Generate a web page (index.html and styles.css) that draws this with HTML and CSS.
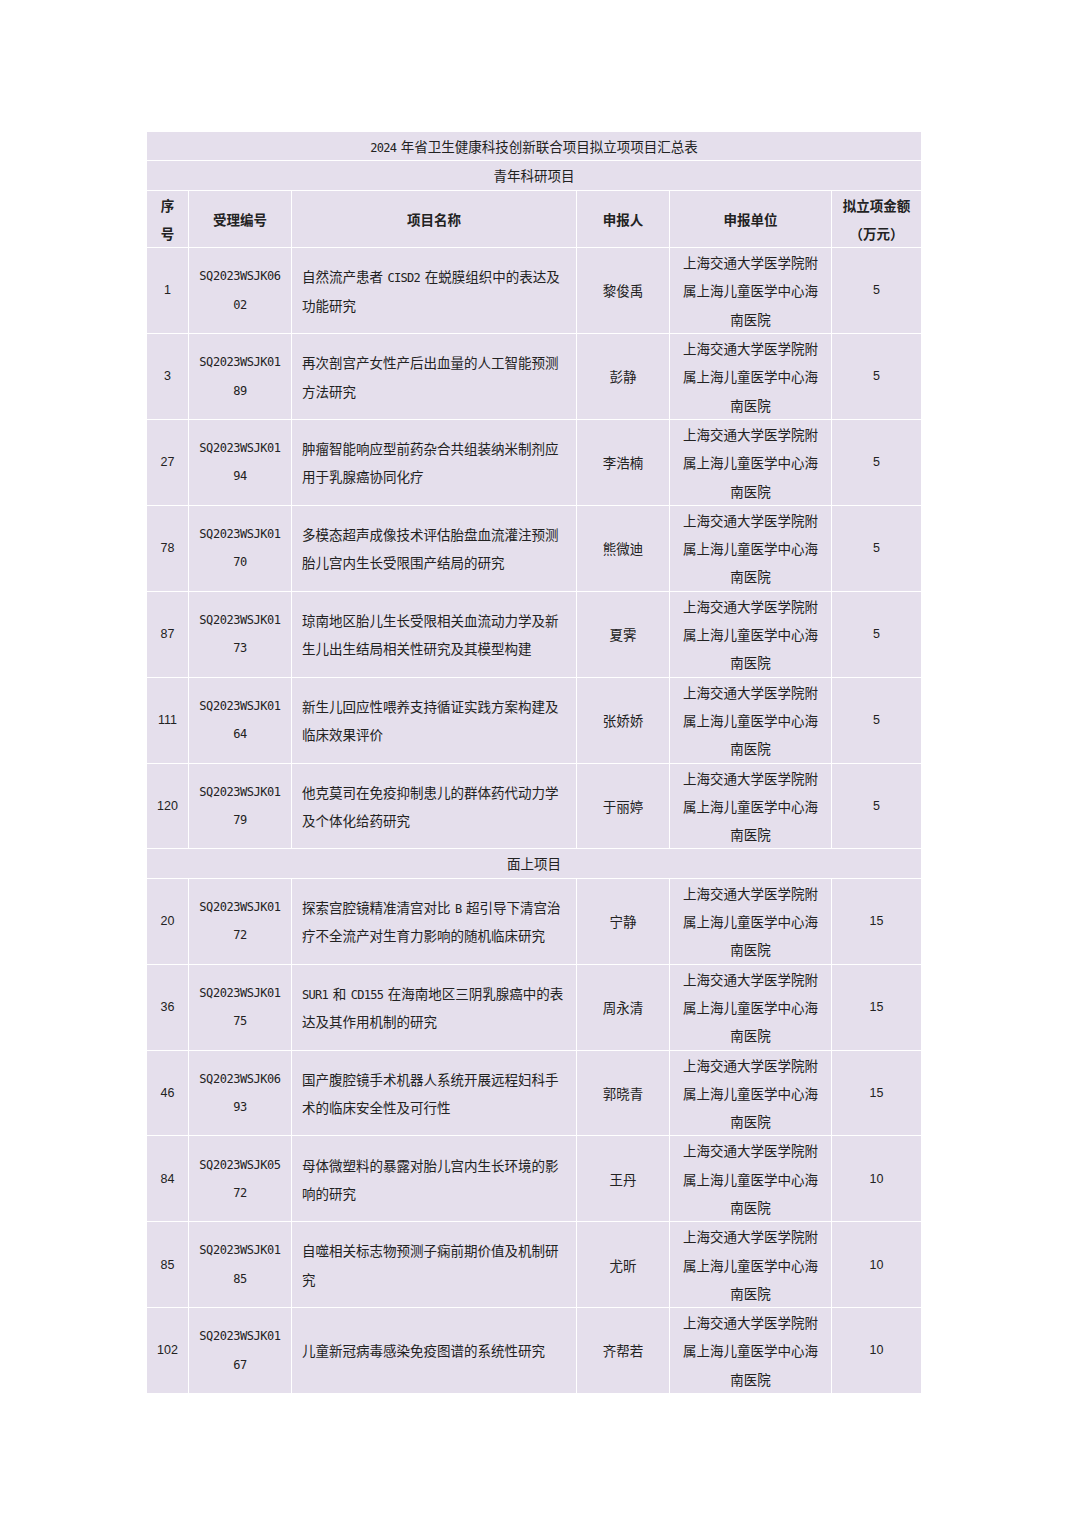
FILE: index.html
```html
<!DOCTYPE html>
<html lang="zh-CN">
<head>
<meta charset="utf-8">
<title>2024年省卫生健康科技创新联合项目拟立项项目汇总表</title>
<link rel="stylesheet" href="styles.css">
</head>
<body>
<div class="page">
<table class="sheet">
<colgroup>
<col class="c-no"><col class="c-code"><col class="c-name"><col class="c-person"><col class="c-unit"><col class="c-amt">
</colgroup>
<tbody>
<tr><td colspan="6" class="banner"><span class="lat">2024 </span>年省卫生健康科技创新联合项目拟立项项目汇总表</td></tr>
<tr><td colspan="6" class="banner">青年科研项目</td></tr>
<tr class="head">
<th class="no">序号</th><th>受理编号</th><th>项目名称</th><th>申报人</th><th class="unit">申报单位</th><th class="amt">拟立项金额（万元）</th>
</tr>
<tr><td class="num">1</td><td class="code">SQ2023WSJK0602</td><td class="title">自然流产患者<span class="lat"> CISD2 </span>在蜕膜组织中的表达及功能研究</td><td>黎俊禹</td><td class="unit">上海交通大学医学院附属上海儿童医学中心海南医院</td><td class="num">5</td></tr>
<tr><td class="num">3</td><td class="code">SQ2023WSJK0189</td><td class="title">再次剖宫产女性产后出血量的人工智能预测方法研究</td><td>彭静</td><td class="unit">上海交通大学医学院附属上海儿童医学中心海南医院</td><td class="num">5</td></tr>
<tr><td class="num">27</td><td class="code">SQ2023WSJK0194</td><td class="title">肿瘤智能响应型前药杂合共组装纳米制剂应用于乳腺癌协同化疗</td><td>李浩楠</td><td class="unit">上海交通大学医学院附属上海儿童医学中心海南医院</td><td class="num">5</td></tr>
<tr><td class="num">78</td><td class="code">SQ2023WSJK0170</td><td class="title">多模态超声成像技术评估胎盘血流灌注预测胎儿宫内生长受限围产结局的研究</td><td>熊微迪</td><td class="unit">上海交通大学医学院附属上海儿童医学中心海南医院</td><td class="num">5</td></tr>
<tr><td class="num">87</td><td class="code">SQ2023WSJK0173</td><td class="title">琼南地区胎儿生长受限相关血流动力学及新生儿出生结局相关性研究及其模型构建</td><td>夏霁</td><td class="unit">上海交通大学医学院附属上海儿童医学中心海南医院</td><td class="num">5</td></tr>
<tr><td class="num">111</td><td class="code">SQ2023WSJK0164</td><td class="title">新生儿回应性喂养支持循证实践方案构建及临床效果评价</td><td>张娇娇</td><td class="unit">上海交通大学医学院附属上海儿童医学中心海南医院</td><td class="num">5</td></tr>
<tr><td class="num">120</td><td class="code">SQ2023WSJK0179</td><td class="title">他克莫司在免疫抑制患儿的群体药代动力学及个体化给药研究</td><td>于丽婷</td><td class="unit">上海交通大学医学院附属上海儿童医学中心海南医院</td><td class="num">5</td></tr>
<tr><td colspan="6" class="banner">面上项目</td></tr>
<tr><td class="num">20</td><td class="code">SQ2023WSJK0172</td><td class="title">探索宫腔镜精准清宫对比<span class="lat"> B </span>超引导下清宫治疗不全流产对生育力影响的随机临床研究</td><td>宁静</td><td class="unit">上海交通大学医学院附属上海儿童医学中心海南医院</td><td class="num">15</td></tr>
<tr><td class="num">36</td><td class="code">SQ2023WSJK0175</td><td class="title"><span class="lat">SUR1 </span>和<span class="lat"> CD155 </span>在海南地区三阴乳腺癌中的表达及其作用机制的研究</td><td>周永清</td><td class="unit">上海交通大学医学院附属上海儿童医学中心海南医院</td><td class="num">15</td></tr>
<tr><td class="num">46</td><td class="code">SQ2023WSJK0693</td><td class="title">国产腹腔镜手术机器人系统开展远程妇科手术的临床安全性及可行性</td><td>郭晓青</td><td class="unit">上海交通大学医学院附属上海儿童医学中心海南医院</td><td class="num">15</td></tr>
<tr><td class="num">84</td><td class="code">SQ2023WSJK0572</td><td class="title">母体微塑料的暴露对胎儿宫内生长环境的影响的研究</td><td>王丹</td><td class="unit">上海交通大学医学院附属上海儿童医学中心海南医院</td><td class="num">10</td></tr>
<tr><td class="num">85</td><td class="code">SQ2023WSJK0185</td><td class="title">自噬相关标志物预测子痫前期价值及机制研究</td><td>尤昕</td><td class="unit">上海交通大学医学院附属上海儿童医学中心海南医院</td><td class="num">10</td></tr>
<tr><td class="num">102</td><td class="code">SQ2023WSJK0167</td><td class="title">儿童新冠病毒感染免疫图谱的系统性研究</td><td>齐帮若</td><td class="unit">上海交通大学医学院附属上海儿童医学中心海南医院</td><td class="num">10</td></tr>
</tbody>
</table>
</div>
</body>
</html>
```
FILE: styles.css
```css
html, body {
  margin: 0;
  padding: 0;
  background: #ffffff;
}

.page {
  padding: 131px 0 0 146px;
}

.sheet {
  border-collapse: collapse;
  table-layout: fixed;
  width: 775px;
  background: #e5dfec;
  color: #222222;
  font-family: "Noto Sans CJK SC", "Noto Sans", sans-serif;
  font-size: 13.5px;
  line-height: 28.3px;
}

.c-no { width: 42px; }
.c-code { width: 103px; }
.c-name { width: 285px; }
.c-person { width: 93px; }
.c-unit { width: 162px; }
.c-amt { width: 90px; }

.sheet td,
.sheet th {
  border: 1px solid #ffffff;
  padding: 0 6px;
  text-align: center;
  vertical-align: middle;
  word-wrap: break-word;
}

.sheet th {
  font-weight: 700;
}

.sheet th.no {
  padding: 0 8px;
}

.sheet .banner {
  padding: 0;
}

.sheet td.code {
  padding: 0 9px;
  font-family: "DejaVu Sans Mono", "Liberation Mono", monospace;
  font-size: 12px;
  letter-spacing: -0.45px;
  word-break: break-all;
}

.sheet td.num {
  padding: 0 4px;
  font-family: "Liberation Sans", "Noto Sans", sans-serif;
  font-size: 12.5px;
}

.sheet td.title {
  text-align: left;
  padding: 0 9px 0 10px;
}

.sheet td.unit,
.sheet th.unit {
  padding: 0 10px;
}

.sheet th.amt {
  padding: 0 6px;
}

.lat {
  font-family: "DejaVu Sans Mono", "Liberation Mono", monospace;
  font-size: 12px;
  line-height: 1;
  letter-spacing: -0.7px;
  word-spacing: -2px;
}
```
